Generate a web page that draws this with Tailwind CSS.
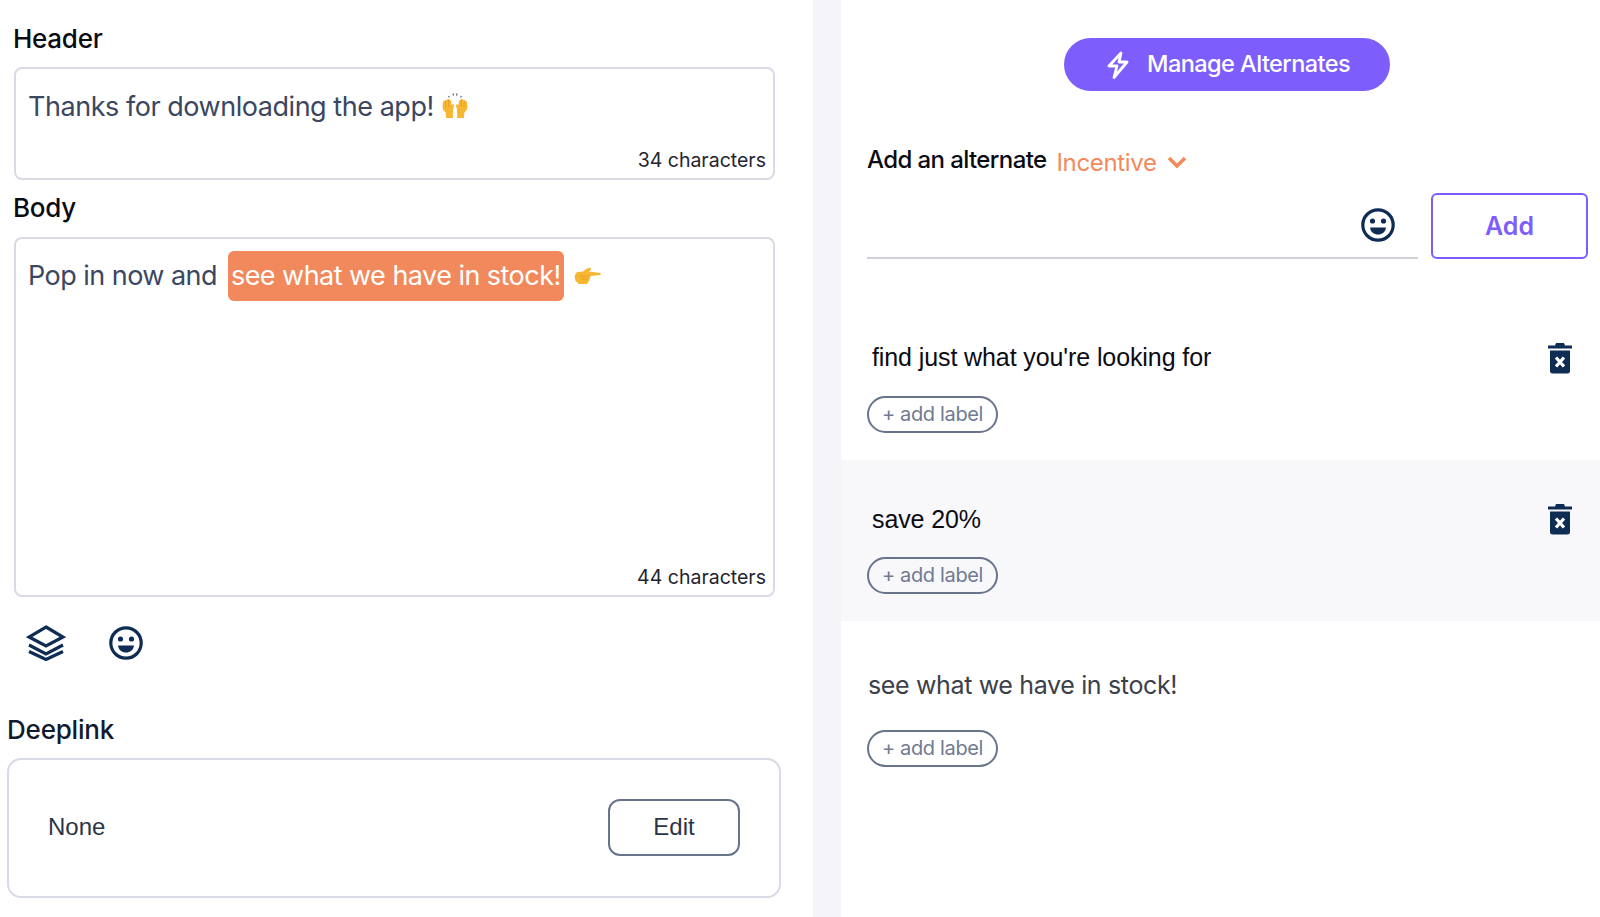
<!doctype html>
<html><head><meta charset="utf-8"><script src="https://cdn.jsdelivr.net/npm/@tailwindcss/browser@4"></script></head>
<body class="bg-white font-['Inter',sans-serif]">
<div class="flex h-[917px] w-[1600px] overflow-hidden bg-white">
  <div class="w-[813px] shrink-0">
    <div class="pl-[14px] pr-[38px] pt-[24px]">
      <div class="-ml-[1px] h-[30px] text-[26px] leading-[30px] font-medium text-[#0b0b14] tracking-[-0.26px]">Header</div>
      <div class="mt-[13px] h-[113px] rounded-[8px] border-2 border-[#d8dbe5] pl-[12px] pr-[7px] flex flex-col justify-between">
        <div class="flex items-center pt-[20px] h-[56px] text-[27px] leading-[36px] tracking-[-0.46px] text-[#3b4760]">
          <span>Thanks for downloading the app!</span>
          <svg class="ml-[7px] -mt-[3px] w-[28px] h-[27px]" viewBox="0 0 28 27"><path d="M1.500 14 L2.500 8.500 L4 9 L4.500 8 L6 8 L6.500 7 L8 7 L8.800 8 L10 8.500 L10.500 13 L12.500 12 L13 13.500 L12 18 L11.800 26 L5 26 L4.800 21 L2 17.500 Z M26.500 14 L25.500 8.500 L24 9 L23.500 8 L22 8 L21.500 7 L20 7 L19.200 8 L18 8.500 L17.500 13 L15.500 12 L15 13.500 L16 18 L16.200 26 L23 26 L23.200 21 L26 17.500 Z" fill="#f7b733"/><path d="M4.500 9 L5 15 M7.500 8 L7.800 15 M23.500 9 L23 15 M20.500 8 L20.200 15" stroke="#e09a1c" stroke-width="0.700"/><path d="M7.500 4 L8.500 5.500 M12 1.500 L12.500 3.500 M16 1.500 L15.500 3.500 M20.500 4 L19.500 5.500" stroke="#4f586c" stroke-width="1.100"/></svg>
        </div>
        <div class="text-right text-[19.500px] leading-[24px] pb-[6px] text-[#1f2530]">34 characters</div>
      </div>
      <div class="-ml-[1px] mt-[13px] h-[30px] text-[26px] leading-[30px] font-medium text-[#0b0b14] tracking-[-0.26px]">Body</div>
      <div class="mt-[14px] h-[360px] rounded-[8px] border-2 border-[#d8dbe5] pl-[12px] pr-[7px] flex flex-col justify-between">
        <div class="flex items-center pt-[12px] text-[27px] leading-[50px] tracking-[-0.54px] text-[#3b4760]">
          <span>Pop in now and</span>
          <span class="ml-[11px] px-[3px] h-[50px] rounded-[6px] bg-[#f1895c] text-white">see what we have in stock!</span>
          <svg class="ml-[10px] w-[27px] h-[18px]" viewBox="0 0 27 18"><path d="M0.500 9 L3 5 L9 4.500 L13 1.500 L16.500 0.500 L17 2.500 L15 4.500 L26.500 6 L26.500 8 L16.500 9 L15.500 13 L13 17 L5 17 L1.500 14 Z" fill="#f7b733"/><path d="M6 9 L15 9 M6 12 L14 12" stroke="#e09a1c" stroke-width="0.700"/></svg>
        </div>
        <div class="text-right text-[19.500px] leading-[24px] pb-[6px] text-[#1f2530]">44 characters</div>
      </div>
      <div class="mt-[28px] h-[36px] pl-[12px] flex items-center gap-[43px]">
        <svg class="w-[40px] h-[36px]" viewBox="0 0 40 36" fill="none" stroke="#0f2c55" stroke-width="3.200"><path d="M20 2 L37 12 L20 21 L3 12 Z"/><path d="M3 20 L20 29 L37 20"/><path d="M3 26.500 L20 34.500 L37 26.500"/></svg>
        <svg class="w-[34px] h-[34px]" viewBox="0 0 34 34"><circle cx="17" cy="17" r="15.200" fill="none" stroke="#0f2c55" stroke-width="3.200"/><circle cx="11.500" cy="13" r="2.600" fill="#0f2c55"/><circle cx="22.500" cy="13" r="2.600" fill="#0f2c55"/><path d="M9 19.500 H25 C24.500 24 21 26.500 17 26.500 C13 26.500 9.500 24 9 19.500 Z" fill="#0f2c55"/></svg>
      </div>
    </div>
    <div class="pl-[7px] pr-[32px] mt-[54px]">
      <div class="h-[30px] text-[26px] leading-[30px] font-medium text-[#111a2e] tracking-[-0.2px]">Deeplink</div>
      <div class="mt-[13px] h-[140px] rounded-[14px] border-2 border-[#d8dbe5] pl-[39px] pr-[39px] flex items-center justify-between">
        <span class="-mt-[2px] font-['Liberation_Sans',sans-serif] text-[24px] text-[#2c3548]">None</span>
        <div class="-mt-[2px] w-[132px] h-[57px] rounded-[12px] border-2 border-[#68738c] flex items-center justify-center font-['Liberation_Sans',sans-serif] text-[24px] text-[#2c3548]">Edit</div>
      </div>
    </div>
  </div>
  <div class="w-[28px] shrink-0 bg-[#f4f4f9]"></div>
  <div class="flex-1 min-w-0">
    <div class="pt-[38px] pl-[223px]">
      <div class="w-[326px] h-[53px] rounded-full bg-[#7d5efc] flex items-center pl-[43px] gap-[18px] text-white text-[23.500px] font-medium tracking-[-0.55px]">
        <svg class="w-[22px] h-[28px] shrink-0" viewBox="0 0 22 28" fill="none" stroke="#fff" stroke-width="2.800" stroke-linejoin="round"><path d="M14 2 L2 15 H10 L7 26.500 L20 11 H12 Z"/></svg>
        <span class="-mt-[2px]">Manage Alternates</span>
      </div>
    </div>
    <div class="mt-[53px] pl-[26px] pr-[12px]">
      <div class="flex items-center h-[34px]">
        <span class="-mt-[2px] text-[24px] font-medium text-[#0b0b14] tracking-[-0.6px]">Add an alternate</span>
        <span class="ml-[10px] mt-[3px] text-[24px] tracking-[-0.35px] text-[#f28a5c]">Incentive</span>
        <svg class="ml-[10px] mt-[1px] w-[20px] h-[14px]" viewBox="0 0 20 14" fill="none" stroke="#f28a5c" stroke-width="3.600"><path d="M2 3 L10 11 L18 3"/></svg>
      </div>
      <div class="flex mt-[15px] h-[66px]">
        <div class="w-[551px] border-b-2 border-[#cfd0d8] flex justify-end pr-[23px] pt-[15px]">
          <svg class="w-[34px] h-[34px]" viewBox="0 0 34 34"><circle cx="17" cy="17" r="15.200" fill="none" stroke="#0f2c55" stroke-width="3.200"/><circle cx="11.500" cy="13" r="2.600" fill="#0f2c55"/><circle cx="22.500" cy="13" r="2.600" fill="#0f2c55"/><path d="M9 19.500 H25 C24.500 24 21 26.500 17 26.500 C13 26.500 9.500 24 9 19.500 Z" fill="#0f2c55"/></svg>
        </div>
        <div class="ml-[13px] w-[157px] h-[66px] rounded-[6px] border-2 border-[#7d5efc] flex items-center justify-center text-[#7d5efc] text-[25px] font-semibold"><span class="mt-[1px]">Add</span></div>
      </div>
    </div>
    <div class="mt-[84px] h-[117px] pl-[26px] pr-[28px]">
      <div class="flex items-center justify-between h-[30px] pl-[5px]">
        <span class="font-['Liberation_Sans',sans-serif] text-[25px] tracking-[-0.1px] text-[#0b0b14]">find just what you're looking for</span>
        <svg class="w-[24px] h-[32px] -mt-[1px]" viewBox="0 0 24 32"><path d="M0 3.500 H7 L8 1 H16 L17 3.500 H24 V6.500 H0 Z" fill="#0f2c55"/><path d="M2 8.500 H22 V29 Q22 31.500 19 31.500 H5 Q2 31.500 2 29 Z" fill="#0f2c55"/><path d="M8 15.500 L16 24.500 M16 15.500 L8 24.500" stroke="#fff" stroke-width="3.200"/></svg>
      </div>
      <div class="mt-[23px] w-[131px] h-[37px] rounded-full border-2 border-[#68738c] flex items-center justify-center text-[20px] tracking-[-0.35px] text-[#6f7a93]"><span class="-mt-[1px]">+ add label</span></div>
    </div>
    <div class="h-[161px] bg-[#f8f8fb] pl-[26px] pr-[28px] pt-[44px]">
      <div class="flex items-center justify-between h-[30px] pl-[5px]">
        <span class="mt-[1px] font-['Liberation_Sans',sans-serif] text-[25px] tracking-[-0.1px] text-[#0b0b14]">save 20%</span>
        <svg class="w-[24px] h-[32px] -mt-[1px]" viewBox="0 0 24 32"><path d="M0 3.500 H7 L8 1 H16 L17 3.500 H24 V6.500 H0 Z" fill="#0f2c55"/><path d="M2 8.500 H22 V29 Q22 31.500 19 31.500 H5 Q2 31.500 2 29 Z" fill="#0f2c55"/><path d="M8 15.500 L16 24.500 M16 15.500 L8 24.500" stroke="#fff" stroke-width="3.200"/></svg>
      </div>
      <div class="mt-[23px] w-[131px] h-[37px] rounded-full border-2 border-[#68738c] flex items-center justify-center text-[20px] tracking-[-0.35px] text-[#6f7a93]"><span class="-mt-[1px]">+ add label</span></div>
    </div>
    <div class="pl-[26px] pt-[49px]">
      <div class="pl-[1px] h-[30px] leading-[30px] text-[25px] tracking-[-0.35px] text-[#3c4149]">see what we have in stock!</div>
      <div class="mt-[30px] w-[131px] h-[37px] rounded-full border-2 border-[#68738c] flex items-center justify-center text-[20px] tracking-[-0.35px] text-[#6f7a93]"><span class="-mt-[1px]">+ add label</span></div>
    </div>
  </div>
</div>
</body></html>
